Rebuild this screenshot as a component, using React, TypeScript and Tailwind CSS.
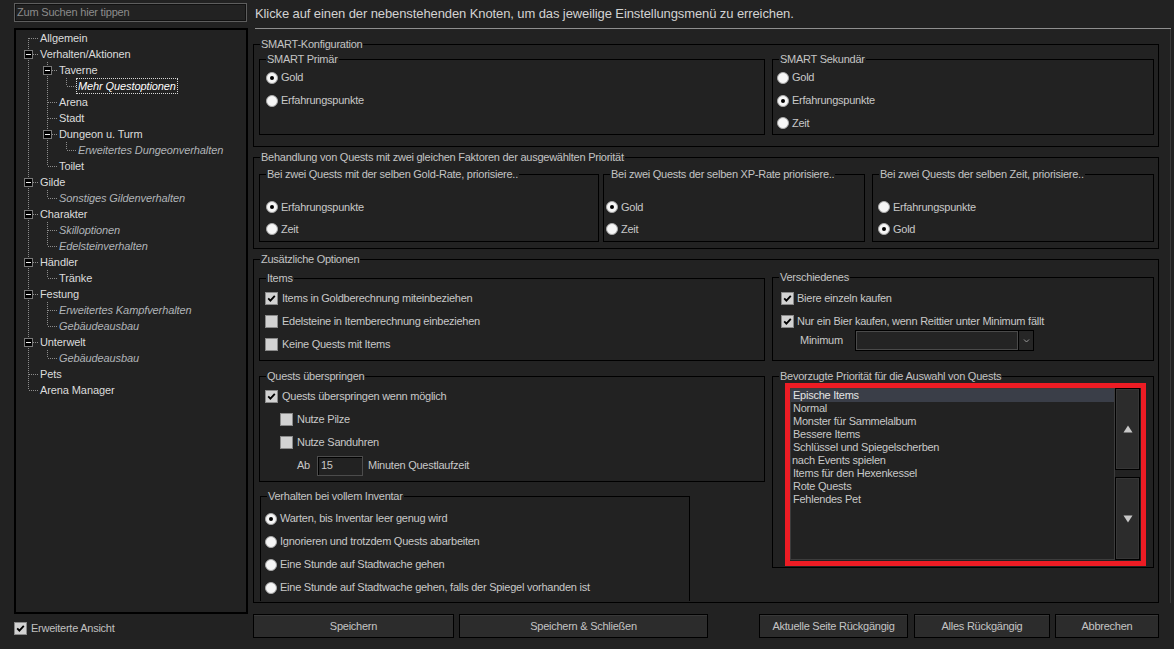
import React from "react";

type TNode = { label: string; italic?: boolean; selected?: boolean; children?: TNode[] };

const tree: TNode[] = [
  { label: "Allgemein" },
  {
    label: "Verhalten/Aktionen",
    children: [
      { label: "Taverne", children: [{ label: "Mehr Questoptionen", italic: true, selected: true }] },
      { label: "Arena" },
      { label: "Stadt" },
      { label: "Dungeon u. Turm", children: [{ label: "Erweitertes Dungeonverhalten", italic: true }] },
      { label: "Toilet" },
    ],
  },
  { label: "Gilde", children: [{ label: "Sonstiges Gildenverhalten", italic: true }] },
  {
    label: "Charakter",
    children: [
      { label: "Skilloptionen", italic: true },
      { label: "Edelsteinverhalten", italic: true },
    ],
  },
  { label: "Händler", children: [{ label: "Tränke" }] },
  {
    label: "Festung",
    children: [
      { label: "Erweitertes Kampfverhalten", italic: true },
      { label: "Gebäudeausbau", italic: true },
    ],
  },
  { label: "Unterwelt", children: [{ label: "Gebäudeausbau", italic: true }] },
  { label: "Pets" },
  { label: "Arena Manager" },
];

type Row = {
  node: TNode;
  depth: number;
  anc: boolean[];
  hasNext: boolean;
  first: boolean;
};

function flatten(nodes: TNode[], depth: number, anc: boolean[], out: Row[]) {
  nodes.forEach((n, i) => {
    const hasNext = i < nodes.length - 1;
    out.push({ node: n, depth, anc, hasNext, first: depth === 0 && i === 0 });
    if (n.children) flatten(n.children, depth + 1, [...anc, hasNext], out);
  });
  return out;
}

const DOT = "#8c8c8c";

function TreeRow({ r }: { r: Row }) {
  const { node } = r;
  return (
    <div className="flex h-[16px] items-center">
      {r.anc.map((a, i) => (
        <svg key={i} width="19" height="16" className="shrink-0">
          {a && <line x1="9.5" y1="0" x2="9.5" y2="16" stroke={DOT} strokeDasharray="1 1" />}
        </svg>
      ))}
      <svg width="19" height="16" className="shrink-0">
        {!r.first && <line x1="9.5" y1="0" x2="9.5" y2="8" stroke={DOT} strokeDasharray="1 1" />}
        {r.hasNext && <line x1="9.5" y1="8" x2="9.5" y2="16" stroke={DOT} strokeDasharray="1 1" />}
        <line x1="10" y1="8.5" x2="19" y2="8.5" stroke={DOT} strokeDasharray="1 1" />
        {node.children && (
          <g>
            <rect x="5.5" y="4.5" width="8" height="8" fill="#000" stroke="#7a7a7a" />
            <line x1="7" y1="8.5" x2="12" y2="8.5" stroke="#f0f0f0" />
          </g>
        )}
      </svg>
      {node.selected ? (
        <span className="h-[16px] leading-[14px] border border-dotted border-[#d8d8d8] px-[1px] italic text-white whitespace-nowrap">
          {node.label}
        </span>
      ) : (
        <span
          className={`ml-[2px] whitespace-nowrap ${node.italic ? "italic text-[#b0b4b8]" : "text-[#dcdcdc]"}`}
        >
          {node.label}
        </span>
      )}
    </div>
  );
}

function Radio({ checked, label }: { checked?: boolean; label: string }) {
  return (
    <div className="flex h-full items-center">
      <span className="flex h-[12px] w-[12px] shrink-0 items-center justify-center rounded-full border border-[#a8a8a8] bg-[#f6f6f6]">
        {checked && <span className="h-[4px] w-[4px] rounded-full bg-black" />}
      </span>
      <span className="ml-[3px] whitespace-nowrap">{label}</span>
    </div>
  );
}

function Check({ checked }: { checked?: boolean }) {
  return (
    <span className="flex h-[13px] w-[13px] shrink-0 items-center justify-center border border-[#8a8a8a] bg-[#d2d2d2]">
      {checked && (
        <svg width="9" height="9" viewBox="0 0 9 9">
          <path d="M1.2 4.3 L3.4 6.6 L7.8 1.8" fill="none" stroke="#000" strokeWidth="1.8" />
        </svg>
      )}
    </span>
  );
}

function CheckRow({ checked, label, className = "" }: { checked?: boolean; label: string; className?: string }) {
  return (
    <div className={`flex h-[23px] items-center ${className}`}>
      <Check checked={checked} />
      <span className="ml-[4px] whitespace-nowrap">{label}</span>
    </div>
  );
}

function Group({
  title,
  className = "",
  children,
}: {
  title: string;
  className?: string;
  children?: React.ReactNode;
}) {
  return (
    <div className={`border border-black ${className}`}>
      <div className="-mt-[7px] ml-[6px] h-[13px] w-fit bg-[#222222] px-[1px] leading-[13px] whitespace-nowrap text-[#c4c4c4]">
        {title}
      </div>
      {children}
    </div>
  );
}

function Btn({ label, className = "" }: { label: string; className?: string }) {
  return (
    <div
      className={`flex h-[24px] items-center justify-center border border-black bg-[#2c2c2c] text-[#c4c4c4] shadow-[inset_0_1px_0_#383838] ${className}`}
    >
      {label}
    </div>
  );
}

const listItems = [
  "Epische Items",
  "Normal",
  "Monster für Sammelalbum",
  "Bessere Items",
  "Schlüssel und Spiegelscherben",
  "nach Events spielen",
  "Items für den Hexenkessel",
  "Rote Quests",
  "Fehlendes Pet",
];

export default function App() {
  const rows = flatten(tree, 0, [], []);
  return (
    <div className="flex h-[649px] w-[1174px] overflow-hidden bg-[#222222] font-['Liberation_Sans',Arial,sans-serif] text-[11px] tracking-[-0.25px] text-[#c8c8c8]">
      {/* Left */}
      <div className="flex w-[247px] shrink-0 flex-col pl-[14px]">
        <div className="mt-[3px] flex h-[19px] w-[233px] items-center border border-[#5e5e5e] bg-[#222222] pl-[2px] tracking-[-0.2px] text-[#8c8c8c] shadow-[inset_0_0_0_1px_#111]">
          Zum Suchen hier tippen
        </div>
        <div className="mt-[6px] h-[586px] w-[234px] border-2 border-black bg-[#222222] pl-[3px] tracking-[-0.1px]">
          {rows.map((r, i) => (
            <TreeRow key={i} r={r} />
          ))}
        </div>
        <div className="mt-[7px] flex h-[15px] items-center">
          <Check checked />
          <span className="ml-[4px] text-[#c0c0c0]">Erweiterte Ansicht</span>
        </div>
      </div>

      {/* Right */}
      <div className="ml-[6px] flex w-[921px] flex-col">
        <div className="flex h-[28px] items-center pl-[2px] text-[13px] tracking-[-0.1px] text-[#d2d2d2]">
          Klicke auf einen der nebenstehenden Knoten, um das jeweilige Einstellungsmenü zu erreichen.
        </div>
        <div className="ml-[2px] h-px w-[916px] bg-[#8f8f8f]" />

        <div className="flex h-[574px]">
          <div className="w-[906px] pt-[15px]">
            {/* SMART */}
            <Group title="SMART-Konfiguration" className="h-[103px]">
              <div className="ml-[5px] mt-[8px] flex gap-[7px]">
                <Group title="SMART Primär" className="h-[76px] w-[506px]">
                  <div className="pl-[6px]">
                    <div className="h-[23px]"><Radio checked label="Gold" /></div>
                    <div className="h-[23px]"><Radio label="Erfahrungspunkte" /></div>
                  </div>
                </Group>
                <Group title="SMART Sekundär" className="h-[76px] w-[382px]">
                  <div className="pl-[4px]">
                    <div className="h-[23px]"><Radio label="Gold" /></div>
                    <div className="h-[23px]"><Radio checked label="Erfahrungspunkte" /></div>
                    <div className="h-[22px]"><Radio label="Zeit" /></div>
                  </div>
                </Group>
              </div>
            </Group>

            {/* Behandlung */}
            <Group title="Behandlung von Quests mit zwei gleichen Faktoren der ausgewählten Priorität" className="mt-[10px] h-[92px]">
              <div className="ml-[5px] mt-[10px] flex">
                <Group title="Bei zwei Quests mit der selben Gold-Rate, priorisiere.." className="h-[68px] w-[340px]">
                  <div className="mt-[15px] pl-[6px]">
                    <div className="h-[22px]"><Radio checked label="Erfahrungspunkte" /></div>
                    <div className="h-[22px]"><Radio label="Zeit" /></div>
                  </div>
                </Group>
                <Group title="Bei zwei Quests der selben XP-Rate priorisiere.." className="ml-[4px] h-[68px] w-[262px]">
                  <div className="mt-[15px] pl-[2px]">
                    <div className="h-[22px]"><Radio checked label="Gold" /></div>
                    <div className="h-[22px]"><Radio label="Zeit" /></div>
                  </div>
                </Group>
                <Group title="Bei zwei Quests der selben Zeit, priorisiere.." className="ml-[7px] h-[68px] w-[282px]">
                  <div className="mt-[15px] pl-[5px]">
                    <div className="h-[22px]"><Radio label="Erfahrungspunkte" /></div>
                    <div className="h-[22px]"><Radio checked label="Gold" /></div>
                  </div>
                </Group>
              </div>
            </Group>

            {/* Zusätzliche Optionen */}
            <Group title="Zusätzliche Optionen" className="mt-[10px] h-[344px]">
              <div className="ml-[5px] flex items-start gap-[7px]">
                <div className="flex w-[506px] flex-col pt-[12px]">
                  <Group title="Items" className="h-[83px]">
                    <div className="mt-[2px] pl-[5px]">
                      <CheckRow checked label="Items in Goldberechnung miteinbeziehen" />
                      <CheckRow label="Edelsteine in Itemberechnung einbeziehen" />
                      <CheckRow label="Keine Quests mit Items" />
                    </div>
                  </Group>
                  <Group title="Quests überspringen" className="mt-[15px] h-[106px]">
                    <div className="mt-[2px] pl-[5px]">
                      <CheckRow checked label="Quests überspringen wenn möglich" />
                      <CheckRow className="pl-[15px]" label="Nutze Pilze" />
                      <CheckRow className="pl-[15px]" label="Nutze Sanduhren" />
                      <div className="flex h-[23px] items-center pl-[32px]">
                        <span className="w-[20px]">Ab</span>
                        <div className="flex h-[20px] w-[46px] items-center border border-[#4c4c4c] bg-[#222222] pl-[3px] shadow-[inset_1px_1px_0_#000]">
                          15
                        </div>
                        <span className="ml-[5px]">Minuten Questlaufzeit</span>
                      </div>
                    </div>
                  </Group>
                  <Group title="Verhalten bei vollem Inventar" className="ml-[1px] mt-[14px] h-[105px] w-[430px] border-b-0">
                    <div className="mt-[4px] pl-[4px]">
                      <div className="h-[23px]"><Radio checked label="Warten, bis Inventar leer genug wird" /></div>
                      <div className="h-[23px]"><Radio label="Ignorieren und trotzdem Quests abarbeiten" /></div>
                      <div className="h-[23px]"><Radio label="Eine Stunde auf Stadtwache gehen" /></div>
                      <div className="h-[23px]"><Radio label="Eine Stunde auf Stadtwache gehen, falls der Spiegel vorhanden ist" /></div>
                    </div>
                  </Group>
                </div>

                <div className="flex w-[382px] flex-col pt-[11px]">
                  <Group title="Verschiedenes" className="h-[84px]">
                    <div className="mt-[3px] pl-[8px]">
                      <CheckRow checked label="Biere einzeln kaufen" className="[&>span:last-child]:ml-[3px]" />
                      <CheckRow checked label="Nur ein Bier kaufen, wenn Reittier unter Minimum fällt" className="[&>span:last-child]:ml-[3px]" />
                    </div>
                    <div className="-mt-[3px] flex h-[21px] items-center pl-[27px]">
                      <span className="w-[55px]">Minimum</span>
                      <div className="flex h-[21px] w-[179px] border border-black">
                        <div className="flex-1 border border-[#4a4a4a] bg-[#242424]" />
                        <div className="flex w-[15px] items-center justify-center border-l border-black bg-[#262626]">
                          <svg width="7" height="5" viewBox="0 0 7 5">
                            <path d="M1 1.5 L3.5 4 L6 1.5" fill="none" stroke="#9a9a9a" strokeWidth="1" />
                          </svg>
                        </div>
                      </div>
                    </div>
                  </Group>
                  <Group title="Bevorzugte Priorität für die Auswahl von Quests" className="mt-[15px] h-[192px]">
                    <div className="ml-[12px] flex h-[183px] w-[361px] border-[5px] border-[#ed1c24]">
                      <div className="h-[172px] w-[325px] border border-[#3c3c3c] bg-[#222222]">
                        {listItems.map((it, i) => (
                          <div
                            key={i}
                            className={`h-[13px] whitespace-nowrap leading-[13px] ${i === 0 ? "bg-[#3a3e48] pl-[2px] text-[#e4e4e4]" : i === 5 ? "pl-[1px]" : "pl-[2px]"}`}
                          >
                            {it}
                          </div>
                        ))}
                      </div>
                      <div className="flex w-[25px] flex-col">
                        <div className="flex h-[82px] items-center justify-center border border-black bg-[#2c2c2c] shadow-[inset_0_0_0_1px_#363636]">
                          <svg width="10" height="8" viewBox="0 0 10 8">
                            <path d="M5 0.5 L9.5 7.5 L0.5 7.5 Z" fill="#c8c8c8" />
                          </svg>
                        </div>
                        <div className="mt-[7px] flex h-[83px] items-center justify-center border border-black bg-[#2c2c2c] shadow-[inset_0_0_0_1px_#363636]">
                          <svg width="10" height="8" viewBox="0 0 10 8">
                            <path d="M0.5 0.5 L9.5 0.5 L5 7.5 Z" fill="#c8c8c8" />
                          </svg>
                        </div>
                      </div>
                    </div>
                  </Group>
                </div>
              </div>
            </Group>
          </div>
          <div className="ml-[11px] w-px bg-[#3a3a3a]" />
        </div>

        <div className="mt-[11px] flex">
          <Btn label="Speichern" className="w-[201px]" />
          <Btn label="Speichern & Schließen" className="ml-[5px] w-[249px]" />
          <Btn label="Aktuelle Seite Rückgängig" className="ml-[51px] w-[149px]" />
          <Btn label="Alles Rückgängig" className="ml-[6px] w-[136px]" />
          <Btn label="Abbrechen" className="ml-[5px] w-[104px]" />
        </div>
      </div>
    </div>
  );
}
